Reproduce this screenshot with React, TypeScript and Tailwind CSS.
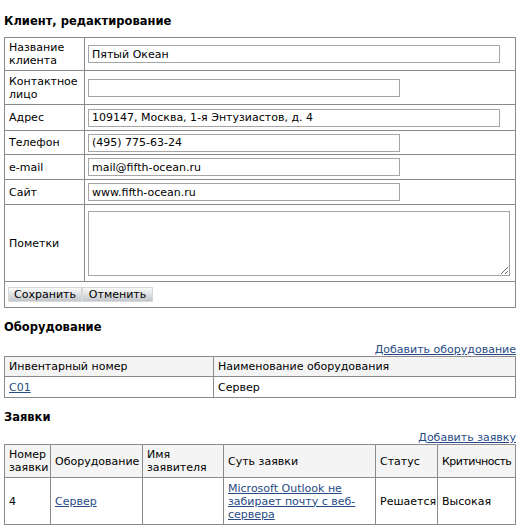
import React from "react";

const cell = "border border-[#8a8a8a] px-[4px] align-middle";
const input = "h-[18px] border border-[#a5a5a5] px-[3px] text-[11px] text-black outline-none";

const fields = [
  { label: "Название клиента", value: "Пятый Океан", wide: true, h: "h-[33px]" },
  { label: "Контактное лицо", value: "", wide: false, h: "h-[34px]" },
  { label: "Адрес", value: "109147, Москва, 1-я Энтузиастов, д. 4", wide: true, h: "h-[26px]" },
  { label: "Телефон", value: "(495) 775-63-24", wide: false, h: "h-[24px]" },
  { label: "e-mail", value: "mail@fifth-ocean.ru", wide: false, h: "h-[25px]" },
  { label: "Сайт", value: "www.fifth-ocean.ru", wide: false, h: "h-[25px]" },
];

const Heading: React.FC<{ children: React.ReactNode; className?: string }> = ({ children, className }) => (
  <h2 className={"text-[11.5px] leading-[16px] font-bold text-black " + (className || "")}>{children}</h2>
);

const AddLink: React.FC<{ children: React.ReactNode; className?: string }> = ({ children, className }) => (
  <div className={"flex justify-end leading-[13px] " + (className || "")}>
    <a href="#" className="text-[#274b85] underline">
      {children}
    </a>
  </div>
);

const App: React.FC = () => {
  return (
    <div
      className="w-[520px] h-[531px] bg-white px-[4px] text-[11px] text-black overflow-hidden"
      style={{ fontFamily: '"DejaVu Sans", Verdana, sans-serif' }}
    >
      <Heading className="pt-[13px]">Клиент, редактирование</Heading>

      <table className="mt-[8px] w-[512px] border-collapse table-fixed leading-[13px]">
        <tbody>
          {fields.map((f) => (
            <tr key={f.label} className={f.h}>
              <td className={cell + " w-[80px]"}>{f.label}</td>
              <td className={cell + " pl-[3px]"}>
                <input
                  readOnly
                  value={f.value}
                  className={input + (f.wide ? " w-[412px]" : " w-[312px]")}
                  style={{ fontFamily: '"DejaVu Sans", Verdana, sans-serif' }}
                />
              </td>
            </tr>
          ))}
          <tr className="h-[77px]">
            <td className={cell}>Пометки</td>
            <td className={cell + " pl-[3px]"}>
              <textarea
                readOnly
                className="block w-[422px] h-[65px] border border-[#a5a5a5] outline-none"
              />
            </td>
          </tr>
          <tr className="h-[26px]">
            <td colSpan={2} className={cell + " pl-[3px]"}>
              <div className="flex">
                <button className="w-[74px] h-[15px] leading-[13px] text-[11px] border border-[#d8d8d8] bg-gradient-to-b from-[#fafafa] to-[#c3c7cc]">
                  Сохранить
                </button>
                <button className="w-[71px] h-[15px] leading-[13px] text-[11px] border border-[#d8d8d8] bg-gradient-to-b from-[#fafafa] to-[#c3c7cc]">
                  Отменить
                </button>
              </div>
            </td>
          </tr>
        </tbody>
      </table>

      <Heading className="mt-[11px]">Оборудование</Heading>
      <AddLink className="mt-[8px]">Добавить оборудование</AddLink>
      <table className="w-[512px] border-collapse table-fixed leading-[13px]">
        <thead>
          <tr className="h-[20px] bg-[#f4f4f4]">
            <th className={cell + " w-[209px] font-normal text-left"}>Инвентарный номер</th>
            <th className={cell + " font-normal text-left"}>Наименование оборудования</th>
          </tr>
        </thead>
        <tbody>
          <tr className="h-[21px]">
            <td className={cell}>
              <a href="#" className="text-[#274b85] underline">C01</a>
            </td>
            <td className={cell}>Сервер</td>
          </tr>
        </tbody>
      </table>

      <Heading className="mt-[11px]">Заявки</Heading>
      <AddLink className="mt-[6px]">Добавить заявку</AddLink>
      <table className="w-[512px] border-collapse table-fixed leading-[13px]">
        <thead>
          <tr className="h-[33px] bg-[#f4f4f4]">
            <th className={cell + " w-[46px] font-normal text-left"}>Номер заявки</th>
            <th className={cell + " w-[92px] font-normal text-left"}>Оборудование</th>
            <th className={cell + " w-[81px] font-normal text-left"}>Имя заявителя</th>
            <th className={cell + " w-[152px] font-normal text-left"}>Суть заявки</th>
            <th className={cell + " w-[62px] font-normal text-left"}>Статус</th>
            <th className={cell + " font-normal text-left tracking-[-0.5px] whitespace-nowrap"}>Критичность</th>
          </tr>
        </thead>
        <tbody>
          <tr className="h-[47px]">
            <td className={cell}>4</td>
            <td className={cell}>
              <a href="#" className="text-[#274b85] underline">Сервер</a>
            </td>
            <td className={cell}></td>
            <td className={cell}>
              <a href="#" className="text-[#274b85] underline">
                Microsoft Outlook не забирает почту с веб-сервера
              </a>
            </td>
            <td className={cell}>Решается</td>
            <td className={cell}>Высокая</td>
          </tr>
        </tbody>
      </table>
    </div>
  );
};

export default App;
